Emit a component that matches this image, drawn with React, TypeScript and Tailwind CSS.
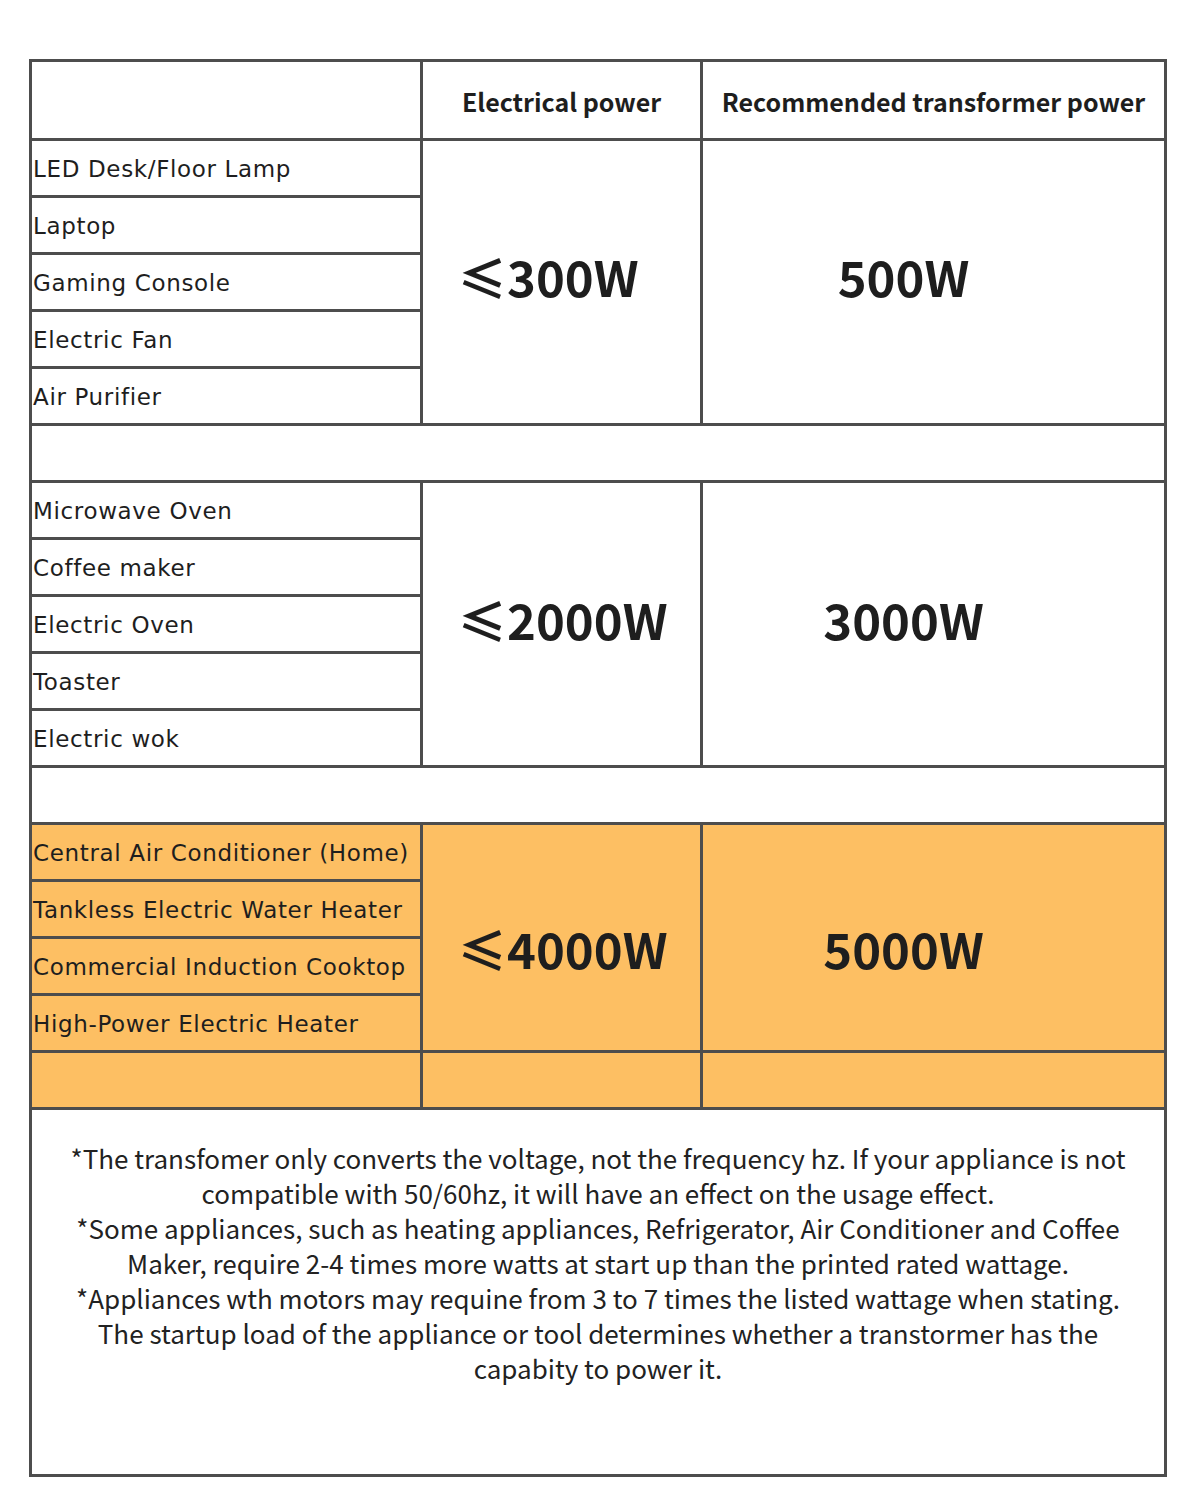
import React from "react";

const group1 = ["LED Desk/Floor Lamp", "Laptop", "Gaming Console", "Electric Fan", "Air Purifier"];
const group2 = ["Microwave Oven", "Coffee maker", "Electric Oven", "Toaster", "Electric wok"];
const group3 = [
  "Central Air Conditioner (Home)",
  "Tankless Electric Water Heater",
  "Commercial Induction Cooktop",
  "High-Power Electric Heater",
];

function Item({ text, orange }: { text: string; orange?: boolean }) {
  return (
    <div
      className={`flex items-center pl-[1px] pt-[3px] font-['DejaVu_Sans','Noto_Sans',sans-serif] text-[23px] tracking-[0.65px] text-[#1e1e1e] ${
        orange ? "bg-[#fdbf63]" : "bg-white"
      }`}
    >
      {text}
    </div>
  );
}

const headCls =
  "flex items-center justify-center bg-white pt-[4px] font-['Noto_Sans_CJK_SC','Noto_Sans',sans-serif] text-[25px] font-bold text-[#1e1e1e]";
const numLeft =
  "flex items-center pl-[35px] font-['Noto_Sans_CJK_SC','Noto_Sans',sans-serif] text-[49px] font-bold text-[#1e1e1e]";
const numCenter =
  "flex items-center justify-center pr-[60px] font-['Noto_Sans_CJK_SC','Noto_Sans',sans-serif] text-[49px] font-bold text-[#1e1e1e]";

export default function App() {
  return (
    <div className="min-h-[1500px] w-[1200px] bg-white pl-[29px] pt-[59px]">
      <div className="grid w-[1138px] grid-cols-[388px_277px_461px] grid-rows-[76px_repeat(17,54px)_364px] gap-[3px] bg-[#4d4d4d] p-[3px]">
        {/* header */}
        <div className="bg-white" />
        <div className={headCls}>Electrical power</div>
        <div className={headCls}>Recommended transformer power</div>

        {/* group 1 */}
        <Item text={group1[0]} />
        <div className={`row-span-5 bg-white pb-[12px] ${numLeft}`}>≤300W</div>
        <div className={`row-span-5 bg-white pb-[12px] ${numCenter}`}>500W</div>
        {group1.slice(1).map((t) => (
          <Item key={t} text={t} />
        ))}
        <div className="col-span-3 bg-white" />

        {/* group 2 */}
        <Item text={group2[0]} />
        <div className={`row-span-5 bg-white pb-[10px] ${numLeft}`}>≤2000W</div>
        <div className={`row-span-5 bg-white pb-[10px] ${numCenter}`}>3000W</div>
        {group2.slice(1).map((t) => (
          <Item key={t} text={t} />
        ))}
        <div className="col-span-3 bg-white" />

        {/* group 3 */}
        <Item text={group3[0]} orange />
        <div className={`row-span-4 bg-[#fdbf63] pt-[20px] ${numLeft}`}>≤4000W</div>
        <div className={`row-span-4 bg-[#fdbf63] pt-[20px] ${numCenter}`}>5000W</div>
        {group3.slice(1).map((t) => (
          <Item key={t} text={t} orange />
        ))}
        <div className="bg-[#fdbf63]" />
        <div className="bg-[#fdbf63]" />
        <div className="bg-[#fdbf63]" />

        {/* notes */}
        <div className="col-span-3 flex flex-col items-center bg-white pt-[30px] text-center font-['Noto_Sans_CJK_SC','Noto_Sans',sans-serif] text-[26px] leading-[35px] text-[#222]">
          <p>*The transfomer only converts the voltage, not the frequency hz. If your appliance is not</p>
          <p>compatible with 50/60hz, it will have an effect on the usage effect.</p>
          <p>*Some appliances, such as heating appliances, Refrigerator, Air Conditioner and Coffee</p>
          <p>Maker, require 2-4 times more watts at start up than the printed rated wattage.</p>
          <p>*Appliances wth motors may requine from 3 to 7 times the listed wattage when stating.</p>
          <p>The startup load of the appliance or tool determines whether a transtormer has the</p>
          <p>capabity to power it.</p>
        </div>
      </div>
    </div>
  );
}
